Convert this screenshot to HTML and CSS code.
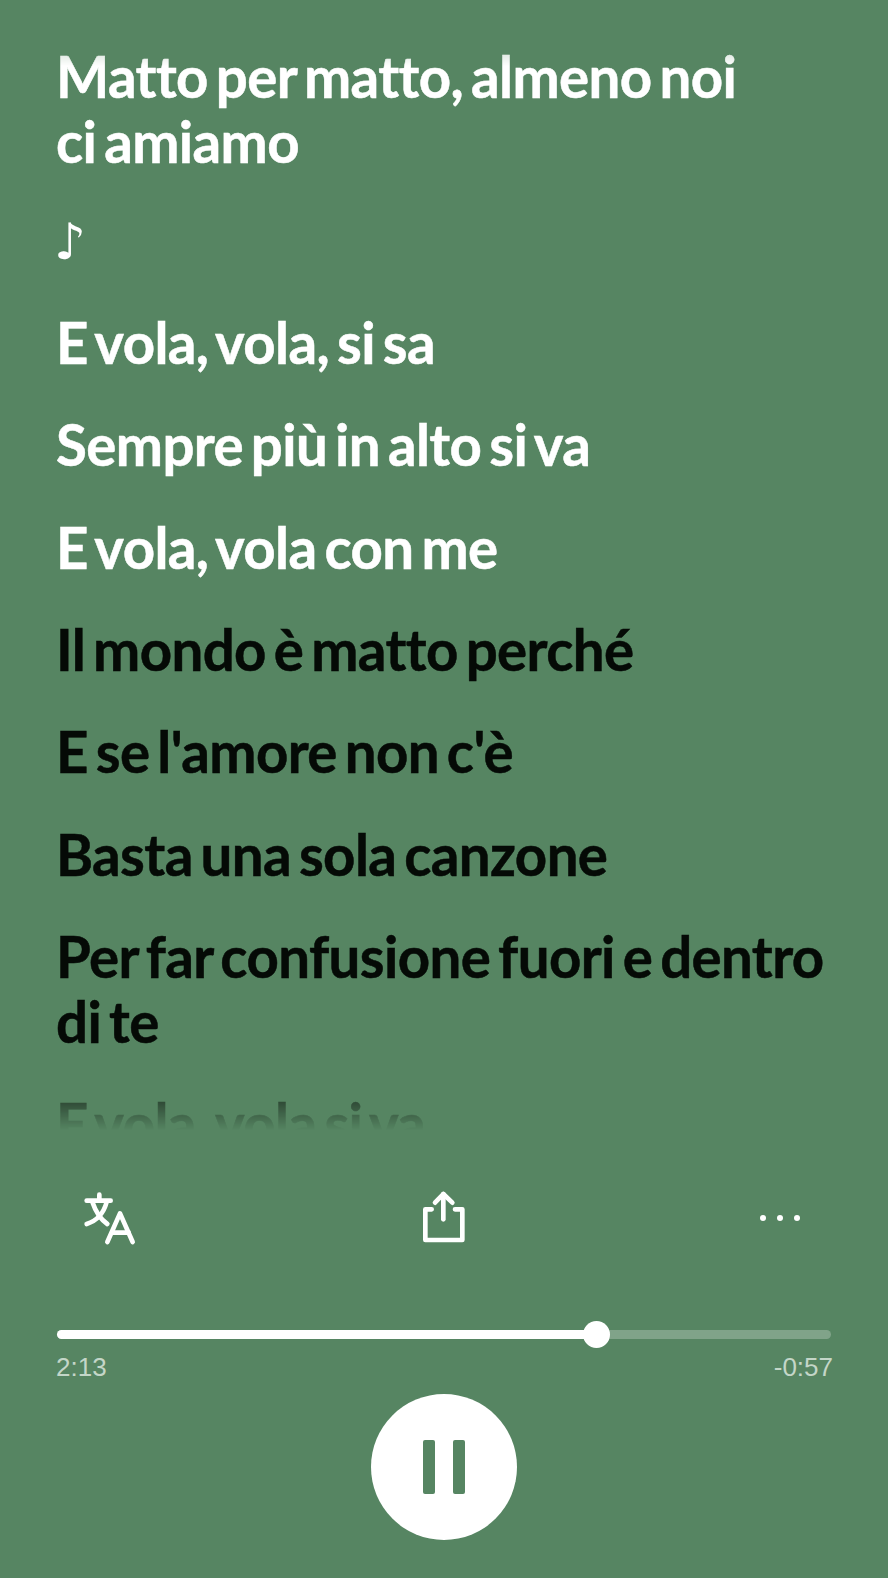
FILE: index.html
```html
<!DOCTYPE html>
<html lang="en">
<head>
    <meta charset="UTF-8">
    <meta name="viewport" content="width=device-width, initial-scale=1.0">
    <title>Lyrics</title>
    <link rel="stylesheet" href="styles.css">
</head>
<body>
    <main class="player">
        <section class="lyrics">
            <p class="line line-past">Matto per matto, almeno noi<br>ci amiamo</p>
            <p class="line line-past line-note">♪</p>
            <p class="line line-past">E vola, vola, si sa</p>
            <p class="line line-past">Sempre più in alto si va</p>
            <p class="line line-past">E vola, vola con me</p>
            <p class="line">Il mondo è matto perché</p>
            <p class="line">E se l'amore non c'è</p>
            <p class="line">Basta una sola canzone</p>
            <p class="line">Per far confusione fuori e dentro<br>di te</p>
            <p class="line">E vola, vola si va</p>
        </section>

        <div class="actions">
            <svg class="icon icon-translate" viewBox="0 0 240 210" fill="none" stroke="#fff" stroke-width="14" stroke-linecap="round" stroke-linejoin="round">
                <path d="M50 62H122"/>
                <path d="M88 44V62"/>
                <path d="M68 68C76 92 90 116 112 132"/>
                <path d="M110 66C102 96 82 122 50 132"/>
                <path d="M112 186L150 100L188 186"/>
                <path d="M126 158H176"/>
            </svg>
            <svg class="icon icon-share" viewBox="0 0 210 210" fill="none" stroke="#fff" stroke-width="14" stroke-linecap="round" stroke-linejoin="round">
                <path d="M68 88H49V180H160V88H138"/>
                <path d="M103 118V42"/>
                <path d="M78 68L103 42L130 68"/>
            </svg>
            <div class="more">
                <span class="dot"></span>
                <span class="dot"></span>
                <span class="dot"></span>
            </div>
        </div>

        <div class="progress">
            <div class="track">
                <div class="track-fill"></div>
                <div class="thumb"></div>
            </div>
            <div class="times">
                <span>2:13</span>
                <span>-0:57</span>
            </div>
        </div>

        <div class="controls">
            <button class="pause" type="button" aria-label="Pause">
                <span class="bar"></span>
                <span class="bar"></span>
            </button>
        </div>
    </main>
</body>
</html>
```

FILE: styles.css
```css
html, body {
    margin: 0;
    padding: 0;
}

body {
    width: 888px;
    height: 1578px;
    overflow: hidden;
    background: #568562;
    font-family: Lato, "Liberation Sans", sans-serif;
}

.player {
    display: flex;
    flex-direction: column;
    height: 1578px;
}

.lyrics {
    height: 1145px;
    box-sizing: border-box;
    padding: 43.5px 56px 0;
    overflow: hidden;
    display: flex;
    flex-direction: column;
    gap: 37.3px;
    flex-shrink: 0;
    mask-image: linear-gradient(to bottom, rgba(0, 0, 0, 0.85) 56px, #000 66px, #000 1070px, rgba(0, 0, 0, 0.45) 1103px, transparent 1130px);
}

.line {
    margin: 0;
    font-size: 56.4px;
    line-height: 65px;
    font-weight: 700;
    letter-spacing: -0.6px;
    word-spacing: -5.2px;
    -webkit-text-stroke: 0.5px currentColor;
    color: #050a06;
    white-space: nowrap;
}

.line-past {
    color: #fff;
}

.line-note {
    font-family: "DejaVu Sans", sans-serif;
    font-size: 50px;
    font-weight: 400;
    line-height: 62px;
    text-indent: -2px;
    -webkit-text-stroke: 0;
}

.actions {
    display: grid;
    grid-template-columns: 1fr auto 1fr;
    align-items: center;
    padding: 35px 70px 0;
}

.icon {
    display: block;
    height: 70px;
}

.icon-translate {
    width: 80px;
}

.icon-share {
    width: 70px;
}

.more {
    display: flex;
    justify-self: end;
    gap: 11px;
    margin: 6px 18px 0 0;
}

.dot {
    width: 6px;
    height: 6px;
    border-radius: 50%;
    background: #fff;
}

.progress {
    padding: 0 57px;
    margin-top: 80px;
}

.track {
    position: relative;
    height: 9px;
    border-radius: 5px;
    background: rgba(255, 255, 255, 0.25);
}

.track-fill {
    width: 70%;
    height: 100%;
    border-radius: 5px;
    background: #fff;
}

.thumb {
    position: absolute;
    left: 69.7%;
    top: 50%;
    width: 27px;
    height: 27px;
    margin: -13.5px 0 0 -13.5px;
    border-radius: 50%;
    background: #fff;
}

.times {
    display: flex;
    justify-content: space-between;
    margin: 14px -2px 0 -1px;
    font-family: "Liberation Sans", sans-serif;
    font-size: 26px;
    line-height: 28px;
    color: #c4d6c8;
}

.controls {
    display: flex;
    justify-content: center;
    margin-top: 13px;
}

.pause {
    display: flex;
    justify-content: center;
    gap: 18px;
    align-items: center;
    width: 146px;
    height: 146px;
    padding: 0;
    border: none;
    border-radius: 50%;
    background: #fff;
}

.bar {
    width: 12px;
    height: 54px;
    border-radius: 2px;
    background: #568562;
}
```
